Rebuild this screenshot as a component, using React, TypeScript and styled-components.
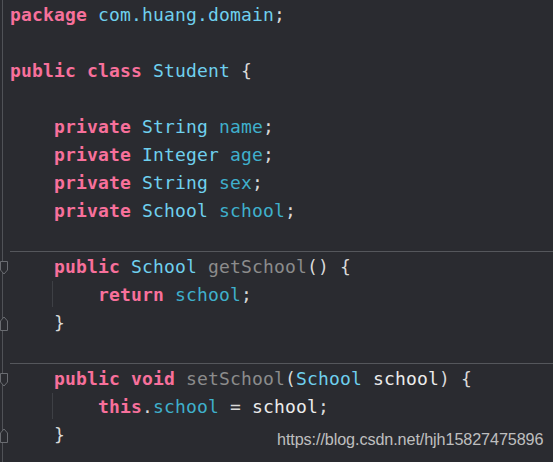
import React from "react";
import styled, { createGlobalStyle } from "styled-components";

const Global = createGlobalStyle`
  html, body { margin: 0; padding: 0; background: #2b2b30; }
  body { overflow: hidden; }
`;

const Editor = styled.div`
  position: relative;
  width: 553px;
  height: 462px;
  background: #2a2b30;
  overflow: hidden;
  display: flex;
  flex-direction: column;
  padding-top: 1px;
  box-sizing: border-box;
  font-family: "DejaVu Sans Mono", "Liberation Mono", monospace;
  font-size: 18px;
  letter-spacing: 0.16px;
  color: #d6d6d6;
`;

const Gutter = styled.div`
  position: absolute;
  left: 2px;
  top: 0;
  bottom: 0;
  width: 1px;
  background: #505257;
`;

const Line = styled.div<{ $indent?: number; $sep?: boolean }>`
  position: relative;
  height: 28px;
  line-height: 28px;
  padding-left: ${(p) => 10 + (p.$indent ?? 0) * 44}px;
  white-space: pre;
  box-sizing: border-box;
  flex-shrink: 0;
  ${(p) =>
    p.$sep
      ? `&::after { content: ""; position: absolute; left: 10px; right: 0; top: 26px; height: 1px; background: #55575c; }`
      : ""}
`;

const Kw = styled.span`
  color: #f7709b;
  font-weight: bold;
`;
const Type = styled.span`
  color: #6fd0ee;
`;
const Field = styled.span`
  color: #3fb0cc;
`;
const Method = styled.span`
  color: #8c8c8c;
`;
const Plain = styled.span`
  color: #d9d9d9;
`;
const Var = styled.span`
  color: #ececec;
`;

const Fold = styled.svg`
  position: absolute;
  left: 0;
  width: 8px;
  height: 16px;
`;

const Guide = styled.div`
  position: absolute;
  left: 52px;
  top: 0;
  bottom: 2px;
  width: 1px;
  background: #3e4045;
`;

const Watermark = styled.div`
  position: absolute;
  left: 277px;
  top: 430px;
  font-family: "Liberation Sans", Arial, sans-serif;
  font-size: 16.2px;
  letter-spacing: -0.1px;
  color: #cfcfcf;
  opacity: 0.9;
`;

const FoldStart = () => (
  <Fold viewBox="0 0 8 16" style={{ top: 8 }}>
    <path d="M0.5 0.5 H7.5 V9 L4 13 L0.5 9 Z" fill="#2a2b30" stroke="#6a6c71" strokeWidth="1" />
  </Fold>
);

const FoldEnd = () => (
  <Fold viewBox="0 0 8 16" style={{ top: 6 }}>
    <path d="M0.5 15.5 H7.5 V6 L4 2 L0.5 6 Z" fill="#2a2b30" stroke="#6a6c71" strokeWidth="1" />
  </Fold>
);

export default function App() {
  return (
    <>
      <Global />
      <Editor>
        <Gutter />
        <Line>
          <Kw>package</Kw> <Type>com.huang.domain</Type>
          <Plain>;</Plain>
        </Line>
        <Line />
        <Line>
          <Kw>public</Kw> <Kw>class</Kw> <Type>Student</Type> <Plain>{"{"}</Plain>
        </Line>
        <Line />
        <Line $indent={1}>
          <Kw>private</Kw> <Type>String</Type> <Field>name</Field>
          <Plain>;</Plain>
        </Line>
        <Line $indent={1}>
          <Kw>private</Kw> <Type>Integer</Type> <Field>age</Field>
          <Plain>;</Plain>
        </Line>
        <Line $indent={1}>
          <Kw>private</Kw> <Type>String</Type> <Field>sex</Field>
          <Plain>;</Plain>
        </Line>
        <Line $indent={1}>
          <Kw>private</Kw> <Type>School</Type> <Field>school</Field>
          <Plain>;</Plain>
        </Line>
        <Line $sep />
        <Line $indent={1}>
          <FoldStart />
          <Kw>public</Kw> <Type>School</Type> <Method>getSchool</Method>
          <Plain>() {"{"}</Plain>
        </Line>
        <Line $indent={2}>
          <Guide />
          <Kw>return</Kw> <Field>school</Field>
          <Plain>;</Plain>
        </Line>
        <Line $indent={1}>
          <FoldEnd />
          <Plain>{"}"}</Plain>
        </Line>
        <Line $sep />
        <Line $indent={1}>
          <FoldStart />
          <Kw>public</Kw> <Kw>void</Kw> <Method>setSchool</Method>
          <Plain>(</Plain>
          <Type>School</Type> <Var>school</Var>
          <Plain>) {"{"}</Plain>
        </Line>
        <Line $indent={2}>
          <Guide />
          <Kw>this</Kw>
          <Plain>.</Plain>
          <Field>school</Field> <Plain>=</Plain> <Var>school</Var>
          <Plain>;</Plain>
        </Line>
        <Line $indent={1}>
          <FoldEnd />
          <Plain>{"}"}</Plain>
        </Line>
        <Watermark>https://blog.csdn.net/hjh15827475896</Watermark>
      </Editor>
    </>
  );
}
